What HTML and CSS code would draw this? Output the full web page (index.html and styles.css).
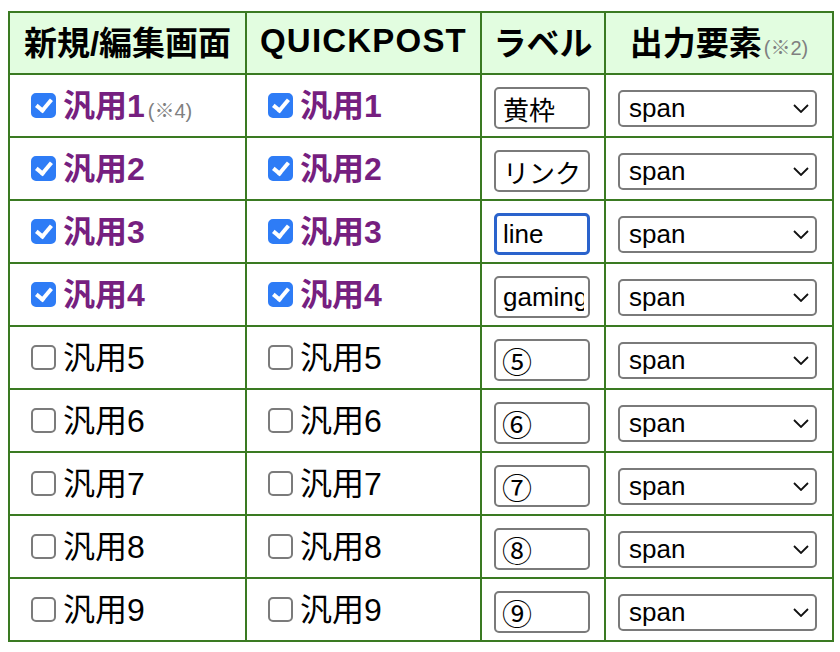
FILE: index.html
```html
<!DOCTYPE html>
<html lang="ja">
<head>
<meta charset="utf-8">
<link rel="stylesheet" href="styles.css">
</head>
<body>
<table class="grid">
  <colgroup>
    <col class="c1"><col class="c2"><col class="c3"><col class="c4">
  </colgroup>
  <thead>
    <tr>
      <th>新規/編集画面</th>
      <th class="latin">QUICKPOST</th>
      <th>ラベル</th>
      <th>出力要素<span class="note">(※2)</span></th>
    </tr>
  </thead>
  <tbody>
    <tr>
      <td><label class="opt on"><input type="checkbox" checked><span>汎用1</span><span class="note">(※4)</span></label></td>
      <td><label class="opt on"><input type="checkbox" checked><span>汎用1</span></label></td>
      <td><input class="txt" type="text" value="黄枠"></td>
      <td><div class="sel"><select><option>span</option></select><svg class="chev" viewBox="0 0 16 9" width="16" height="9"><path d="M1 1 L8 8 L15 1" fill="none" stroke="#111" stroke-width="1.8"/></svg></div></td>
    </tr>
    <tr>
      <td><label class="opt on"><input type="checkbox" checked><span>汎用2</span></label></td>
      <td><label class="opt on"><input type="checkbox" checked><span>汎用2</span></label></td>
      <td><input class="txt" type="text" value="リンク"></td>
      <td><div class="sel"><select><option>span</option></select><svg class="chev" viewBox="0 0 16 9" width="16" height="9"><path d="M1 1 L8 8 L15 1" fill="none" stroke="#111" stroke-width="1.8"/></svg></div></td>
    </tr>
    <tr>
      <td><label class="opt on"><input type="checkbox" checked><span>汎用3</span></label></td>
      <td><label class="opt on"><input type="checkbox" checked><span>汎用3</span></label></td>
      <td><input class="txt focus" type="text" value="line"></td>
      <td><div class="sel"><select><option>span</option></select><svg class="chev" viewBox="0 0 16 9" width="16" height="9"><path d="M1 1 L8 8 L15 1" fill="none" stroke="#111" stroke-width="1.8"/></svg></div></td>
    </tr>
    <tr>
      <td><label class="opt on"><input type="checkbox" checked><span>汎用4</span></label></td>
      <td><label class="opt on"><input type="checkbox" checked><span>汎用4</span></label></td>
      <td><input class="txt" type="text" value="gaming"></td>
      <td><div class="sel"><select><option>span</option></select><svg class="chev" viewBox="0 0 16 9" width="16" height="9"><path d="M1 1 L8 8 L15 1" fill="none" stroke="#111" stroke-width="1.8"/></svg></div></td>
    </tr>
    <tr>
      <td><label class="opt"><input type="checkbox"><span>汎用5</span></label></td>
      <td><label class="opt"><input type="checkbox"><span>汎用5</span></label></td>
      <td><input class="txt circ" type="text" value="⑤"></td>
      <td><div class="sel"><select><option>span</option></select><svg class="chev" viewBox="0 0 16 9" width="16" height="9"><path d="M1 1 L8 8 L15 1" fill="none" stroke="#111" stroke-width="1.8"/></svg></div></td>
    </tr>
    <tr>
      <td><label class="opt"><input type="checkbox"><span>汎用6</span></label></td>
      <td><label class="opt"><input type="checkbox"><span>汎用6</span></label></td>
      <td><input class="txt circ" type="text" value="⑥"></td>
      <td><div class="sel"><select><option>span</option></select><svg class="chev" viewBox="0 0 16 9" width="16" height="9"><path d="M1 1 L8 8 L15 1" fill="none" stroke="#111" stroke-width="1.8"/></svg></div></td>
    </tr>
    <tr>
      <td><label class="opt"><input type="checkbox"><span>汎用7</span></label></td>
      <td><label class="opt"><input type="checkbox"><span>汎用7</span></label></td>
      <td><input class="txt circ" type="text" value="⑦"></td>
      <td><div class="sel"><select><option>span</option></select><svg class="chev" viewBox="0 0 16 9" width="16" height="9"><path d="M1 1 L8 8 L15 1" fill="none" stroke="#111" stroke-width="1.8"/></svg></div></td>
    </tr>
    <tr>
      <td><label class="opt"><input type="checkbox"><span>汎用8</span></label></td>
      <td><label class="opt"><input type="checkbox"><span>汎用8</span></label></td>
      <td><input class="txt circ" type="text" value="⑧"></td>
      <td><div class="sel"><select><option>span</option></select><svg class="chev" viewBox="0 0 16 9" width="16" height="9"><path d="M1 1 L8 8 L15 1" fill="none" stroke="#111" stroke-width="1.8"/></svg></div></td>
    </tr>
    <tr>
      <td><label class="opt"><input type="checkbox"><span>汎用9</span></label></td>
      <td><label class="opt"><input type="checkbox"><span>汎用9</span></label></td>
      <td><input class="txt circ" type="text" value="⑨"></td>
      <td><div class="sel"><select><option>span</option></select><svg class="chev" viewBox="0 0 16 9" width="16" height="9"><path d="M1 1 L8 8 L15 1" fill="none" stroke="#111" stroke-width="1.8"/></svg></div></td>
    </tr>
  </tbody>
</table>
</body>
</html>
```
FILE: styles.css
```css
html, body {
  margin: 0;
  padding: 0;
  background: #ffffff;
}
body {
  padding: 11px 8px 0 8px;
  font-family: "Liberation Sans", "Noto Sans CJK JP", sans-serif;
  color: #000;
}
.grid {
  width: 824px;
  border-collapse: collapse;
  table-layout: fixed;
}
.c1 { width: 237px; }
.c2 { width: 235px; }
.c3 { width: 124px; }
.c4 { width: 228px; }

.grid th, .grid td {
  border: 2px solid #3a7a22;
  padding: 0;
}
.grid th {
  background: #e2fde0;
  height: 56px;
  padding-bottom: 4px;
  font-size: 33px;
  font-weight: bold;
  text-align: center;
  vertical-align: middle;
  white-space: nowrap;
}
.grid th.latin {
  letter-spacing: 1.2px;
}
.grid td {
  height: 61px;
  vertical-align: middle;
}
.grid td:nth-child(1), .grid td:nth-child(2) {
  padding-left: 21px;
}
.grid td:nth-child(3) {
  padding-left: 12px;
}
.grid td:nth-child(4) {
  padding-left: 12px;
}
.note {
  font-size: 20px;
  font-weight: normal;
  color: #808080;
  margin-left: 2px;
  letter-spacing: 0;
}
.opt {
  display: flex;
  align-items: center;
  font-size: 32px;
  line-height: 1;
  white-space: nowrap;
}
.opt.on {
  color: #761f80;
  font-weight: bold;
}
.opt .note {
  align-self: flex-end;
  margin-bottom: 1px;
  margin-left: 3px;
}
.opt input {
  appearance: none;
  -webkit-appearance: none;
  width: 25px;
  height: 25px;
  margin: 0 7px 0 0;
  border: 2px solid #7b7b7b;
  border-radius: 5px;
  background: #fff;
  position: relative;
  flex: none;
}
.opt input:checked {
  background: #2e7cf6;
  border-color: #2e7cf6;
}
.opt input:checked::after {
  content: "";
  position: absolute;
  left: 6px;
  top: 1px;
  width: 6px;
  height: 12px;
  border-right: 4px solid #fff;
  border-bottom: 4px solid #fff;
  transform: rotate(40deg);
}
.txt {
  box-sizing: border-box;
  width: 96px;
  height: 42px;
  margin-top: 5px;
  padding: 0 4px 0 7px;
  border: 2px solid #7a7a7a;
  border-radius: 5px;
  font-family: "Liberation Sans", "Noto Sans CJK JP", sans-serif;
  font-size: 26px;
  color: #000;
  background: #fff;
  outline: none;
  display: block;
}
.txt.circ {
  font-size: 30px;
  padding-left: 6px;
}
.txt.focus {
  border: 3px solid #2a63cc;
  padding-left: 6px;
}
.sel {
  position: relative;
  width: 199px;
  margin-top: 5px;
}
.sel select {
  appearance: none;
  -webkit-appearance: none;
  box-sizing: border-box;
  width: 199px;
  height: 37px;
  padding: 0 0 0 9px;
  border: 2px solid #7a7a7a;
  border-radius: 5px;
  background: #fff;
  font-family: "Liberation Sans", "Noto Sans CJK JP", sans-serif;
  font-size: 26px;
  color: #000;
  display: block;
}
.chev {
  position: absolute;
  right: 8px;
  top: 14px;
  pointer-events: none;
}
```
